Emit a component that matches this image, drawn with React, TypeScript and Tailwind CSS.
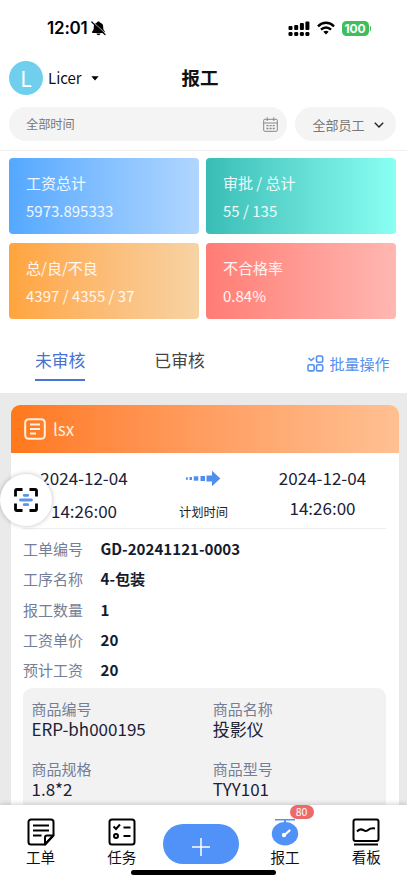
import React from 'react';

interface Stat {
    label: string;
    value: string;
    className: string;
}

const stats: Stat[] = [
    { label: '工资总计', value: '5973.895333', className: 'from-[#53a8ff] to-[#b0d6ff]' },
    { label: '审批 / 总计', value: '55 / 135', className: 'from-[#38bdb6] to-[#8afff3]' },
    { label: '总/良/不良', value: '4397 / 4355 / 37', className: 'from-[#ffa43c] to-[#f7d3a4]' },
    { label: '不合格率', value: '0.84%', className: 'from-[#ff7c74] to-[#ffb7b2]' },
];

const details = [
    { label: '工单编号', value: 'GD-20241121-0003' },
    { label: '工序名称', value: '4-包装' },
    { label: '报工数量', value: '1' },
    { label: '工资单价', value: '20' },
    { label: '预计工资', value: '20' },
];

const product = [
    { label: '商品编号', value: 'ERP-bh000195' },
    { label: '商品名称', value: '投影仪' },
    { label: '商品规格', value: '1.8*2' },
    { label: '商品型号', value: 'TYY101' },
];

const StatusBar: React.FC = () => (
    <div className="flex h-[56px] shrink-0 items-center justify-between pl-[47px] pr-[36px] font-['Inter',sans-serif]">
        <div className="flex items-center gap-[3px]">
            <span className="text-[17px] font-semibold leading-none tracking-[-0.2px]">12:01</span>
            <svg width="15" height="15" viewBox="0 0 15 15">
                <path d="M7.5 .5c.9 0 1.4.5 1.4 1.1 2.200.6 3.300 2.200 3.300 4.400 0 3 .7 3.600 1.600 4.500.4.5.1 1.400-.5 1.400H1.700c-.6 0-.9-.9-.5-1.400C2.100 9.600 2.800 9 2.800 6c0-2.200 1.100-3.800 3.300-4.400 0-.6.5-1.100 1.400-1.100zM5.500 12.600h4c-.1 1-1 1.700-2 1.700s-1.900-.7-2-1.700z" fill="#000" />
                <path d="M1.800 .8l12.700 11.900" stroke="#fff" strokeWidth="1" />
                <path d="M.8 1l13.200 12.500" stroke="#000" strokeWidth="1.200" strokeLinecap="round" />
            </svg>
        </div>
        <div className="flex items-center gap-[7px]">
            <svg width="22" height="15" viewBox="0 0 22 15">
                <rect x="0.500" y="5" width="4" height="4" rx="1" />
                <rect x="6.200" y="4" width="4" height="5" rx="1" />
                <rect x="11.900" y="2" width="4" height="7" rx="1" />
                <rect x="17.400" y="0.500" width="4" height="8.500" rx="1" />
                <rect x="0.500" y="11" width="4" height="4" rx="1.300" />
                <rect x="6.200" y="11" width="4" height="4" rx="1.300" />
                <rect x="11.900" y="11" width="4" height="4" rx="1.300" />
                <rect x="17.400" y="11" width="4" height="4" rx="1.300" />
            </svg>
            <svg width="18" height="14" viewBox="0 0 18 14" fill="none" stroke="#000" strokeWidth="2.400">
                <path d="M1 5.300c4.500-4.700 11.500-4.700 16 0" />
                <path d="M4 8.600c2.900-2.900 7.100-2.900 10 0" />
                <path d="M9 13.500L6.300 10.800c1.500-1.500 3.900-1.500 5.400 0z" fill="#000" stroke="none" />
            </svg>
            <div className="flex items-center gap-px">
                <span className="flex h-[15px] w-[27px] items-center justify-center rounded-[4.500px] bg-[#3fbf5b] text-[12px] font-bold leading-[15px] tracking-[-0.200px] text-white">
                    100
                </span>
                <span className="h-[5px] w-[1.500px] rounded-r bg-[#3fbf5b]" />
            </div>
        </div>
    </div>
);

const Header: React.FC = () => (
    <header className="grid h-[44px] shrink-0 grid-cols-[1fr_auto_1fr] items-center pl-[9px] pr-[16px]">
        <div className="flex items-center">
            <div className="flex h-[34px] w-[34px] items-center justify-center rounded-full bg-[#71cfee] pt-[1px] text-[21px] leading-none text-white">
                L
            </div>
            <span className="ml-[5px] text-[15px] text-[#111]">Licer</span>
            <svg className="ml-[9px]" width="8" height="5" viewBox="0 0 8 5">
                <path d="M.3.300h7.400L4 4.500z" fill="#000" />
            </svg>
        </div>
        <h1 className="text-[18.500px] font-bold text-[#111]">报工</h1>
    </header>
);

const Filters: React.FC = () => (
    <div className="flex h-[51px] shrink-0 gap-[8px] border-b border-[#f4efef] pl-[9px] pr-[11px] pt-[7px]">
        <div className="flex h-[34px] w-[278px] items-center justify-between rounded-full bg-[#f4f4f4] pl-[17px] pr-[9.500px] pt-[1px] text-[12.200px] text-[#777]">
            全部时间
            <svg className="-mt-px" width="15" height="15" viewBox="0 0 15 15" fill="none" stroke="#888" strokeWidth="1">
                <rect x="0.700" y="2.300" width="13.600" height="12" rx="1" />
                <path d="M.7 6h13.600M4.200.3v3.700M10.800.3v3.700" />
                <path d="M3.500 8.700h2M6.600 8.700h2M9.700 8.700h2M3.500 11.500h2M6.600 11.500h2M9.700 11.500h2" strokeWidth="1.300" />
            </svg>
        </div>
        <div className="flex h-[34px] flex-1 items-center justify-between rounded-full bg-[#f4f4f4] pl-[17.500px] pr-[12px] pt-px text-[13px] text-[#777]">
            全部员工
            <svg width="10" height="6" viewBox="0 0 10 6" fill="none" stroke="#222" strokeWidth="1.400">
                <path d="M.8.800L5 5 9.200.8" />
            </svg>
        </div>
    </div>
);

const Tabs: React.FC = () => (
    <div className="mt-[25px] flex h-[49px] shrink-0 items-start pl-[35px] pr-[17.500px] text-[16.800px] leading-[32px]">
        <div className="h-[37px] border-b-2 border-[#4a74d8] text-[#4871d3]">未审核</div>
        <div className="ml-[69px] text-[#444]">已审核</div>
        <button className="ml-auto flex items-center gap-[5px] pt-[4px] text-[15px] text-[#5590ee]">
            <svg className="-mt-px" width="17" height="17" viewBox="0 0 17 17" fill="none" stroke="currentColor" strokeWidth="1.600">
                <path d="M1.500 3l2.600 2.500L7.200 2.800" />
                <rect x="9.500" y="1" width="6.200" height="6.200" rx="1.500" />
                <rect x="1" y="9.700" width="6.200" height="6.200" rx="1.500" />
                <rect x="9.500" y="9.700" width="6.200" height="6.200" rx="1.500" />
            </svg>
            批量操作
        </button>
    </div>
);

const OrderCard: React.FC = () => (
    <div className="ml-[11px] mr-[8px] overflow-hidden rounded-t-[9px] bg-white">
        <div className="flex h-[48px] items-center gap-[7px] bg-linear-to-r from-[#ff7819] to-[#ffc092] pl-[13px] text-[17px] text-[#fff0df]">
            <svg width="22" height="22" viewBox="0 0 22 22" fill="none" stroke="currentColor" strokeWidth="2">
                <rect x="1.200" y="1.200" width="19.600" height="19.600" rx="3.500" />
                <path d="M6 6.500h10M6 11h10M6 15.500h6" />
            </svg>
            lsx
        </div>
        <div className="ml-[12px] mr-[13px] flex h-[76px] justify-between border-b border-[#eee] text-center text-[17px] text-[#1b2136]">
            <div className="w-[122px] pt-[8px] leading-[33px]">
                <div>2024-12-04</div>
                <div>14:26:00</div>
            </div>
            <div className="flex flex-col items-center pl-[3px] pt-[17px]">
                <svg width="36" height="17" viewBox="0 0 36 17" fill="#4f8ff0">
                    <path d="M21.500 5.500h5.500V.7l8.300 7.800-8.300 7.800v-4.800h-5.500z" />
                    <rect x="15.500" y="6" width="4.500" height="5" />
                    <rect x="8.800" y="6.300" width="4.500" height="4.400" />
                    <rect x="4.500" y="7" width="2.500" height="3" />
                    <rect x="1" y="7.300" width="1.800" height="2.500" />
                </svg>
                <span className="mt-[15px] text-[12.300px] leading-[20px] text-[#222]">计划时间</span>
            </div>
            <div className="w-[127px] pt-[10px] leading-[30px]">
                <div>2024-12-04</div>
                <div>14:26:00</div>
            </div>
        </div>
        <div className="pl-[12px] pt-[5px] text-[15px] leading-[30.300px]">
            {details.map((item) => (
                <div key={item.label} className="flex gap-[17.500px]">
                    <span className="text-[#747e96]">{item.label}</span>
                    <span className="-mt-px text-[15.100px] font-bold text-[#151b2d]">{item.value}</span>
                </div>
            ))}
        </div>
        <div className="ml-[12px] mr-[13px] mt-[3px] grid h-[160px] grid-cols-2 content-start gap-x-[8px] gap-y-[20px] rounded-[9px] bg-[#f2f2f2] pl-[8.500px] pt-[11px]">
            {product.map((item) => (
                <div key={item.label} className="leading-[20px]">
                    <div className="text-[15px] text-[#747e96]">{item.label}</div>
                    <div className="text-[17px] text-[#1b2136]">{item.value}</div>
                </div>
            ))}
        </div>
    </div>
);

const NavItem: React.FC<{ label: string; children: React.ReactNode }> = ({ label, children }) => (
    <div className="relative flex flex-1 flex-col items-center pt-[13px] text-[14.600px] leading-[22px] text-[#111]">
        {children}
        <span>{label}</span>
    </div>
);

const BottomNav: React.FC = () => (
    <nav className="relative flex h-[78px] shrink-0 bg-white shadow-[0_-1px_5px_rgba(0,0,0,0.18)]">
        <NavItem label="工单">
            <svg width="28" height="28" viewBox="0 0 28 28" fill="none" stroke="#000" strokeWidth="2">
                <path d="M26.500 17V4a2.500 2.500 0 0 0-2.500-2.500H4A2.500 2.500 0 0 0 1.500 4v20A2.500 2.500 0 0 0 4 26.500h14z" strokeLinejoin="round" />
                <path d="M26.500 17.500H20a2 2 0 0 0-2 2v7l8.500-9z" strokeLinejoin="round" />
                <path d="M6 7.500h16M6 12.500h16M6 17.500h8.500" />
            </svg>
        </NavItem>
        <NavItem label="任务">
            <svg width="28" height="28" viewBox="0 0 28 28" fill="none" stroke="#000" strokeWidth="2">
                <rect x="1.500" y="1.500" width="25" height="25" rx="2.500" />
                <path d="M5.500 8.500l2.500 2.500 4-4.500M15.500 9.500h7M15.500 18h7" />
                <circle cx="8" cy="18" r="2" />
            </svg>
        </NavItem>
        <div className="flex flex-1 justify-center">
            <button className="mr-[6px] mt-[19px] flex h-[40px] w-[76px] shrink-0 items-center justify-center rounded-full bg-[#5092f7] pt-[5px]">
                <svg width="18" height="18" viewBox="0 0 18 18" stroke="#fff" strokeWidth="1.500">
                    <path d="M9 0v18M0 9h18" />
                </svg>
            </button>
        </div>
        <NavItem label="报工">
            <svg width="28" height="28" viewBox="0 0 28 28" fill="#5092f7">
                <path d="M4 .9h20v1.600H15V5h-2V2.500H4z" />
                <ellipse cx="14" cy="15.800" rx="13.200" ry="11.700" />
                <path d="M13.500 17L18.500 12.500" stroke="#fff" strokeWidth="2.200" strokeLinecap="round" />
                <circle cx="13" cy="17" r="2.200" fill="#fff" />
            </svg>
            <span className="absolute left-[45px] top-0 flex h-[14px] w-[24px] items-center justify-center rounded-full bg-[#ed6a6a] text-[10.500px] leading-none text-white">
                80
            </span>
        </NavItem>
        <NavItem label="看板">
            <svg width="28" height="28" viewBox="0 0 28 28" fill="none" stroke="#000" strokeWidth="2">
                <rect x="1.500" y="1.500" width="25" height="21.500" rx="2" />
                <path d="M5 13.500c2.500-3 4.500-2.500 6.500-1.300s3.500 1 5-.4 3.500-1.700 6.500-1.300" />
                <path d="M2 26.500h24" />
            </svg>
        </NavItem>
        <div className="absolute bottom-[8px] left-[131px] h-[5px] w-[145px] rounded-full bg-black" />
    </nav>
);

const App: React.FC = () => {
    return (
        <div className="relative flex h-screen flex-col overflow-hidden bg-white font-['Noto_Sans_CJK_SC',sans-serif]">
            <StatusBar />
            <Header />
            <Filters />
            <div className="grid shrink-0 grid-cols-2 gap-x-[7px] gap-y-[9px] pl-[9px] pr-[11px] pt-[7px]">
                {stats.map((stat) => (
                    <div
                        key={stat.label}
                        className={`h-[76px] rounded-[4px] bg-linear-to-r pl-[17px] pt-[11px] text-[15px] leading-[27.500px] text-white/90 ${stat.className}`}
                    >
                        <div>{stat.label}</div>
                        <div>{stat.value}</div>
                    </div>
                ))}
            </div>
            <Tabs />
            <main className="min-h-0 flex-1 overflow-hidden bg-[#eaeaea] pt-[12px]">
                <OrderCard />
            </main>
            <BottomNav />

            {/* floating scan button */}
            <button className="absolute left-0 top-[474px] flex h-[52px] w-[52px] items-center justify-center rounded-full bg-white shadow-[0_0_5px_rgba(0,0,0,0.25)]">
                <svg width="24" height="24" viewBox="0 0 24 24" fill="none">
                    <path d="M1.500 8.500V3q0-1.500 1.500-1.500H8.500M15.500 1.500H21q1.500 0 1.500 1.500v5.500M22.500 15.500V21q0 1.500-1.500 1.500h-5.500M8.500 22.500H3q-1.500 0-1.500-1.500v-5.500" stroke="#000" strokeWidth="2.800" />
                    <path d="M10.200 7.300h3.600M6.500 12h11M10.200 16.700h3.600" stroke="#5a95e8" strokeWidth="2.800" strokeLinecap="round" />
                </svg>
            </button>
        </div>
    );
};

export default App;
